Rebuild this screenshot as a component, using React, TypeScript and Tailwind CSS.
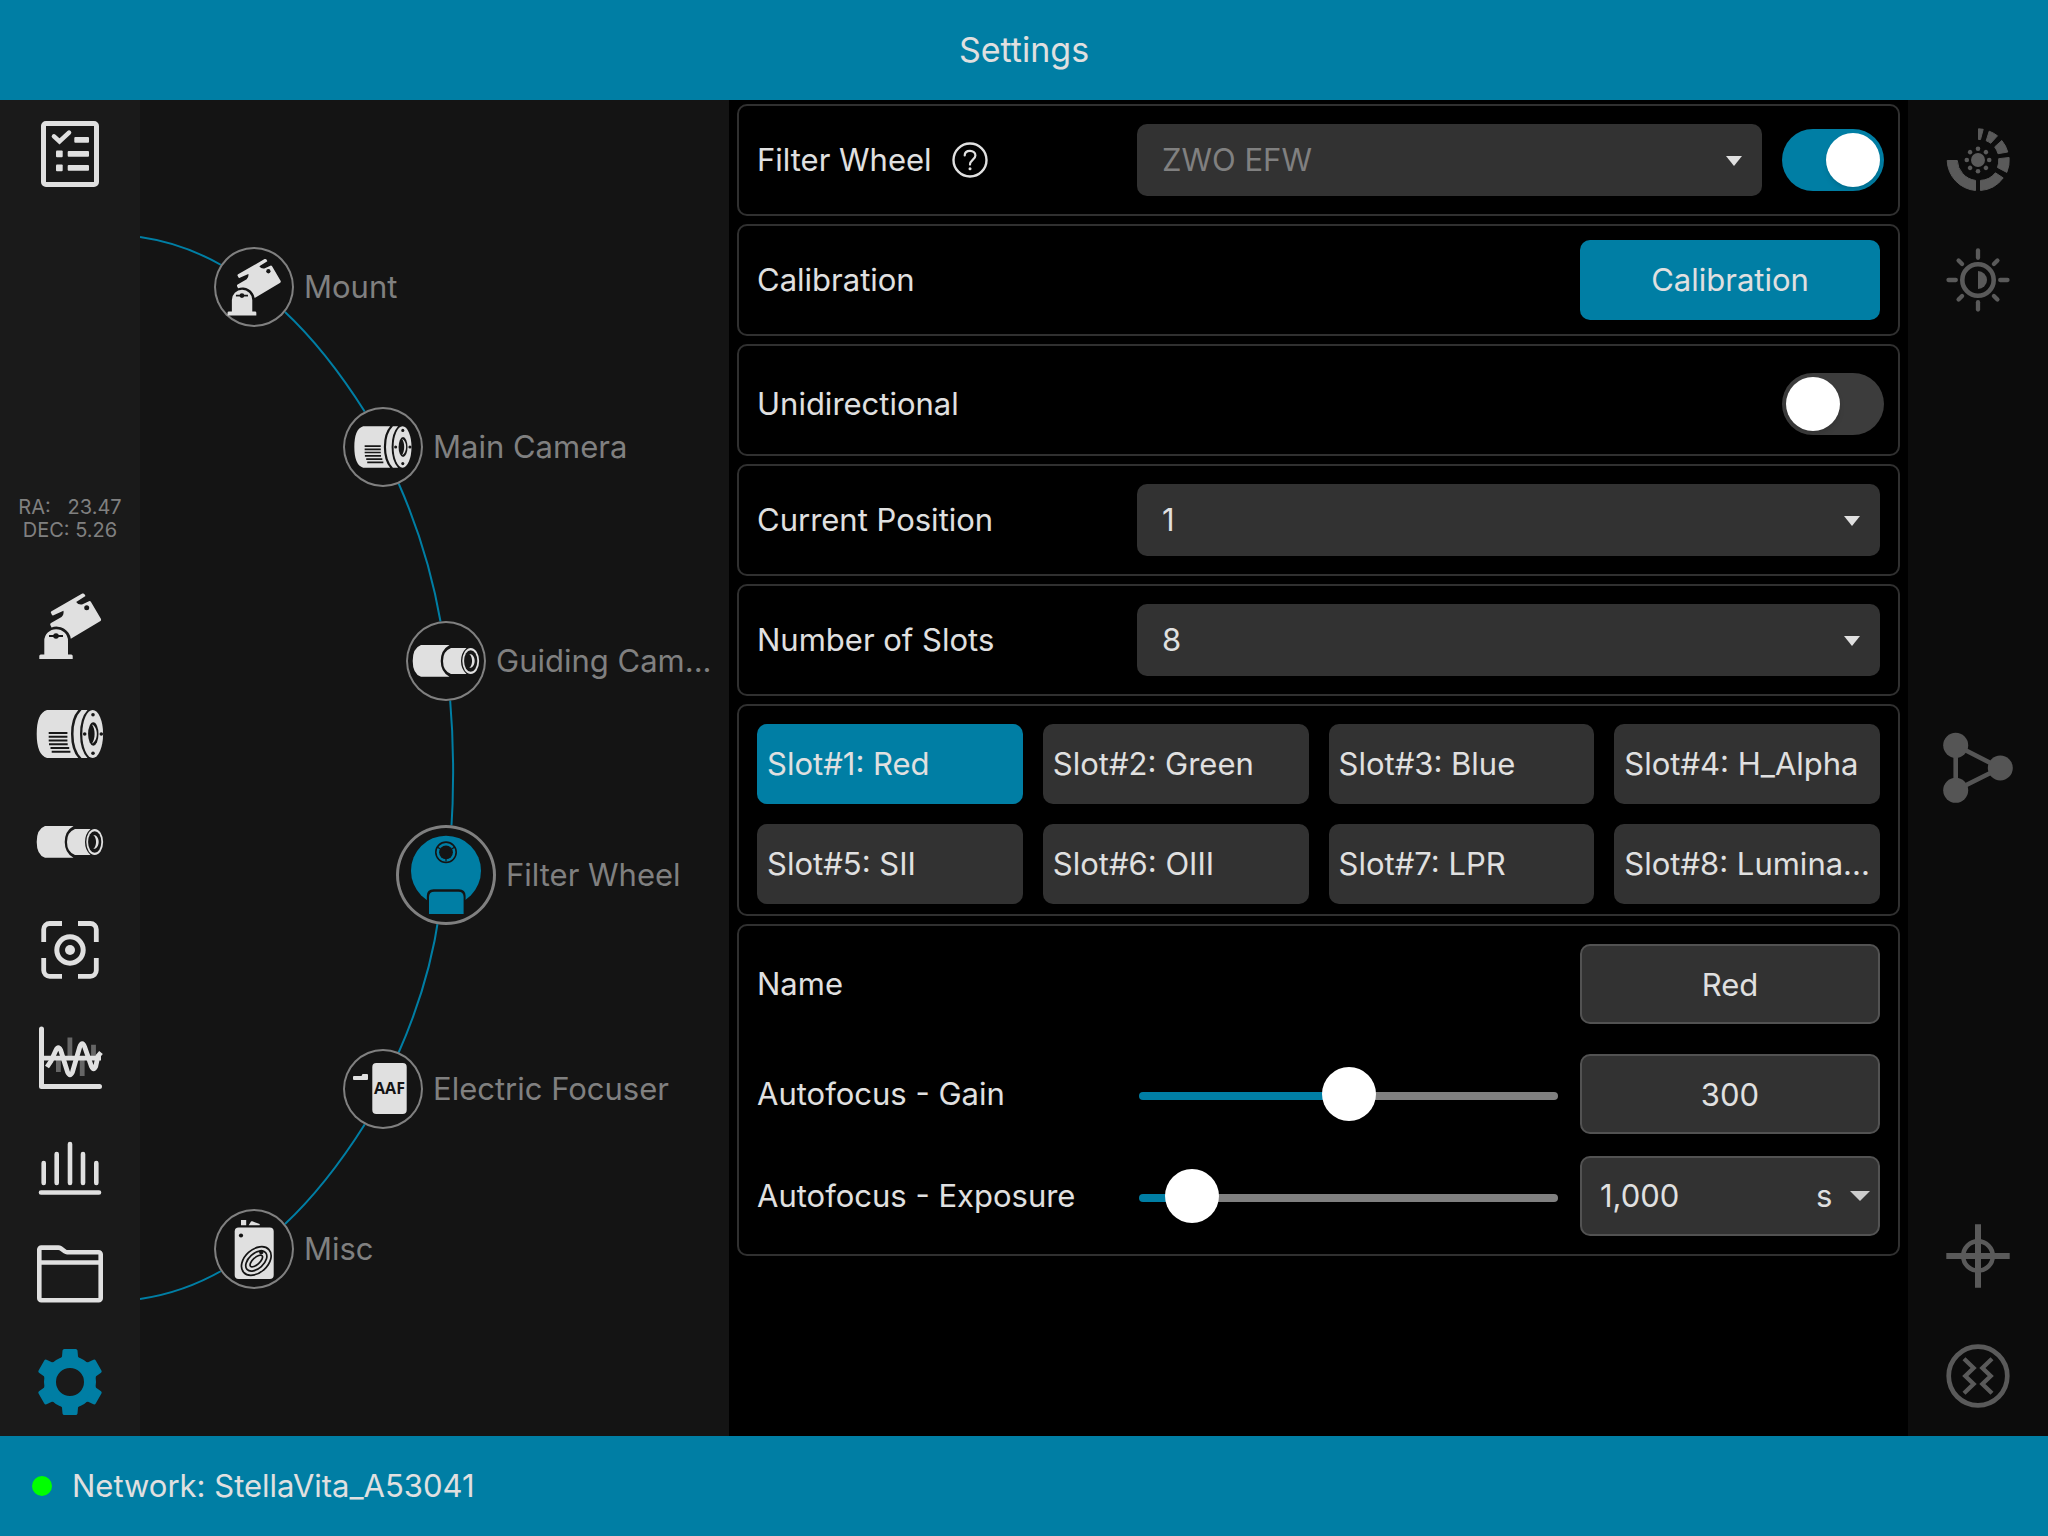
import { useState } from "react";
import type { CSSProperties, ReactNode } from "react";
import clsx from "clsx";

type IconProps = { className?: string };

function Icon({ className = "size-[72px]", box = 72, children }: { className?: string; box?: number; children: ReactNode }) {
  return (
    <svg viewBox={`0 0 ${box} ${box}`} className={clsx("shrink-0", className)} fill="none" aria-hidden="true">
      {children}
    </svg>
  );
}

function TasksIcon() {
  return (
    <Icon>
      <rect x="9.5" y="5.5" width="53" height="61" rx="2.5" stroke="currentColor" strokeWidth="5" />
      <path d="M20 18.4l5.5 5L35 14.6" stroke="currentColor" strokeWidth="4.6" strokeLinecap="round" />
      <g fill="currentColor">
        <rect x="40.3" y="19" width="14.7" height="5.8" rx="1" />
        <rect x="22" y="32.4" width="6.7" height="6.9" rx="1" />
        <rect x="33.7" y="33" width="21.3" height="5.8" rx="1" />
        <rect x="22" y="46.4" width="6.7" height="6.9" rx="1" />
        <rect x="33.7" y="47" width="21.3" height="5.8" rx="1" />
      </g>
    </Icon>
  );
}

function MountIcon({ className }: IconProps) {
  return (
    <Icon className={className}>
      <path
        fill="currentColor"
        d="M17.5 21.2L48.3 3.6Q49.8 3 50.5 4.2L51.5 6 42.2 12Q44 15 48 14.5L55 11.2Q56.3 10.7 57 12L67 29Q67.4 30.3 66.5 31L36.8 48.7A14.5 14.5 0 0 0 17.5 37.5L16.2 34.8Q16 33.8 17 33L27.5 27Q30 25 29.5 20.8L19.5 25.2Q18.6 25.7 18 25L16.8 22.5Q16.7 21.6 17.5 21.2z"
      />
      <path fill="currentColor" d="M5.3 69V66Q5.3 64.5 6.8 64.5H10.3V51a11.85 11.85 0 0 1 23.7 0V64.5H37.2Q38.7 64.5 38.7 66V69z" />
      <circle cx="52.7" cy="17.7" r="2.5" fill="#171717" />
      <path d="M15 46h14" stroke="#171717" strokeWidth="2" />
      <circle cx="22" cy="46" r="2.8" fill="#171717" />
    </Icon>
  );
}

function CameraIcon({ className }: IconProps) {
  return (
    <Icon className={className}>
      <g fill="currentColor">
        <path d="M13 12H44.3Q37 20 37 36T44.3 60H13Q2.7 57 2.7 36 2.7 15 13 12z" />
        <path d="M47.5 12H53.5Q46 20 46 36T53.5 60H47.5Q39.5 52 39.5 36T47.5 12z" />
        <ellipse cx="58.7" cy="36" rx="10.4" ry="24" />
      </g>
      <ellipse cx="59.3" cy="36" rx="5.2" ry="11.7" fill="#171717" />
      <path fill="currentColor" d="M58 26.5C64.5 29 64.5 43 58 45.5 61.5 41 61.5 31 58 26.5z" />
      <g fill="#171717">
        <circle cx="59" cy="16.7" r="1.8" />
        <circle cx="59" cy="55.3" r="1.8" />
        <circle cx="50.7" cy="36" r="1.8" />
        <circle cx="67.3" cy="36" r="1.8" />
      </g>
      <path
        d="M14.7 35h18.7M14.7 38.7h18.7M14.7 42.4h18.7M15 46.2h18.7M16.5 50h18.7M17.7 53.8h18.7"
        stroke="#171717"
        strokeWidth="2"
      />
    </Icon>
  );
}

function GuideIcon({ className }: IconProps) {
  return (
    <Icon className={className}>
      <g fill="currentColor">
        <path d="M11 20H39.5Q30.7 25 30.7 36T39.5 51.8H11Q2.7 49 2.7 36 2.7 23 11 20z" />
        <path d="M41 23H56.5Q51 28 51 36T56.5 49H41Q33 46 33 36T41 23z" />
        <ellipse cx="60.7" cy="36" rx="8.4" ry="13" />
      </g>
      <ellipse cx="60.7" cy="36" rx="6.6" ry="10.8" fill="#171717" />
      <path fill="currentColor" d="M59.3 29C66.5 29 66.5 43 59.3 43 63 40 63 32 59.3 29z" />
    </Icon>
  );
}

function FocusIcon() {
  return (
    <Icon>
      <path
        d="M9.7 28V15.5a6 6 0 0 1 6-6H28M44 9.5H56.3a6 6 0 0 1 6 6V28M62.3 44V56.3a6 6 0 0 1-6 6H44M28 62.3H15.7a6 6 0 0 1-6-6V44"
        stroke="currentColor"
        strokeWidth="4.8"
      />
      <circle cx="36" cy="36" r="13.2" stroke="currentColor" strokeWidth="5" />
      <circle cx="36" cy="36" r="5" fill="currentColor" />
    </Icon>
  );
}

function GraphIcon() {
  return (
    <Icon>
      <path d="M35.9 15.6V35M59.5 22.8V35M24.4 37V50M48.2 37V54" stroke="#666" strokeWidth="4.8" />
      <path d="M7.5 7V64.6H65.5" stroke="currentColor" strokeWidth="5" strokeLinecap="round" strokeLinejoin="round" />
      <path d="M8 36.2H67" stroke="currentColor" strokeWidth="4.8" />
      <path
        d="M13 45L17 39 22 28Q24.3 23.500 26.600 28L33.500 50Q36 55.500 38.500 50L45.700 25Q48.200 18.500 50.700 25L57.500 44.500Q59.600 49 61.700 44.500L64 34 67 30.500"
        stroke="currentColor"
        strokeWidth="4.800"
      />
    </Icon>
  );
}

function HistogramIcon() {
  return (
    <Icon>
      <path
        d="M9.7 33V53M22.7 24V53M36 14V53M49 24V53M62.3 33V53M7 62.5H65"
        stroke="currentColor"
        strokeWidth="4.6"
        strokeLinecap="round"
      />
    </Icon>
  );
}

function FolderIcon() {
  return (
    <Icon>
      <path
        d="M5.3 11.6a2 2 0 0 1 2-2H24.3Q25.5 9.6 26.5 10.2L31 13.5Q32 14.2 33 14.2H64.7a2 2 0 0 1 2 2V60.3a2 2 0 0 1-2 2H7.3a2 2 0 0 1-2-2zM5.3 24.5H66.7"
        stroke="currentColor"
        strokeWidth="4.6"
      />
    </Icon>
  );
}

function GearIcon() {
  return (
    <Icon>
      <circle cx="36" cy="36" r="20" stroke="currentColor" strokeWidth="12" />
      {[0, 60, 120, 180, 240, 300].map((angle) => (
        <path
          key={angle}
          fill="currentColor"
          transform={`rotate(${angle} 36 36)`}
          d="M26.5 13L28 10.5 28.5 4.5Q28.8 3 30.3 3H41.7Q43.2 3 43.5 4.5L44 10.5 45.5 13z"
        />
      ))}
    </Icon>
  );
}

function FilterWheelIcon() {
  return (
    <Icon className="size-[100px]" box={100}>
      <circle cx="50" cy="45.7" r="35" fill="#007ea4" />
      <circle cx="50" cy="27.3" r="10.2" stroke="#141414" strokeWidth="1.6" />
      <circle cx="50" cy="27.3" r="6.9" fill="#141414" />
      <path d="M50 33v3.500M44.500 24l-3-1.700M55.500 24l3-1.700" stroke="#141414" strokeWidth="1.200" />
      <path d="M30.8 92V71Q30.8 64.2 37.6 64.2H62.8Q69.6 64.2 69.6 71V92z" fill="#141414" />
      <path d="M33 89V72Q33 66.7 38.3 66.7H62.3Q67.6 66.7 67.6 72V89z" fill="#007ea4" />
    </Icon>
  );
}

function FocuserIcon() {
  return (
    <Icon className="size-20" box={80}>
      <path fill="currentColor" d="M11 27h7.5l1-2H24q1 0 1 1v4q0 1-1 1H11q-1 0-1-1v-2q0-1 1-1z" />
      <rect x="29.3" y="14" width="34.4" height="51" rx="4" fill="currentColor" />
      <text x="46.5" y="45" textAnchor="middle" className="fill-[#141414] font-['Open_Sans',sans-serif] text-[16px] font-bold">
        AAF
      </text>
    </Icon>
  );
}

function MiscIcon() {
  return (
    <Icon className="size-20" box={80}>
      <path fill="currentColor" d="M27 11h5.2v5.2H27zM34.7 16.2L37 12.5Q37.5 12 38.3 12.3L45.7 15v1.2z" />
      <rect x="20.7" y="18.4" width="39" height="51.6" rx="4" fill="currentColor" />
      <circle cx="27" cy="26.5" r="2.1" fill="#141414" />
      <g transform="rotate(-42 42.3 52)" stroke="#141414" strokeWidth="1.7">
        <ellipse cx="42.3" cy="52" rx="17" ry="11.6" />
        <ellipse cx="42.3" cy="52" rx="12.5" ry="7.5" />
        <ellipse cx="42.3" cy="52" rx="7.8" ry="3.4" />
      </g>
      <circle cx="47.3" cy="43" r="2.3" fill="#141414" />
    </Icon>
  );
}

function ExposureIcon() {
  return (
    <Icon>
      <g fill="currentColor" stroke="currentColor" strokeWidth="1" strokeLinejoin="round">
        <path d="M36.5 4.8L41.2 5.3 38.5 15.5H36.5z" />
        <path d="M47.2 7.2A31 31 0 0 1 55.5 11.8L48.7 19.3A20 20 0 0 0 44.2 16.8z" />
        <path d="M59.8 16.5A31 31 0 0 1 65.8 28L56 29.7A20 20 0 0 0 52.7 22.9z" />
        <path d="M67.1 33.5A31 31 0 0 1 64.8 48.4L55.5 43.5A20 20 0 0 0 56.7 34.7z" />
        <path d="M61.2 53.9A31 31 0 0 1 38.5 66.5V56.4A20 20 0 0 0 53.4 48.8z" />
        <path d="M33.5 66.5A31 31 0 0 1 5.2 36.5H15.3A21 21 0 0 0 33.5 56.4z" />
      </g>
      <circle cx="36" cy="36" r="7" fill="currentColor" />
      {[0, 45, 90, 135, 180, 225, 270, 315].map((angle) => (
        <circle key={angle} cx="36" cy="24.8" r="2.3" fill="currentColor" transform={`rotate(${angle} 36 36)`} />
      ))}
    </Icon>
  );
}

function BrightnessIcon() {
  return (
    <Icon>
      <circle cx="36" cy="36" r="15.7" stroke="currentColor" strokeWidth="4.6" />
      <path d="M36 27a9 9 0 0 1 0 18z" fill="currentColor" />
      {[0, 45, 90, 135, 180, 225, 270, 315].map((angle) => (
        <path
          key={angle}
          d={angle % 90 ? "M36 13.5V8.5" : "M36 13.8V6.5"}
          stroke="currentColor"
          strokeWidth="4.3"
          strokeLinecap="round"
          transform={`rotate(${angle} 36 36)`}
        />
      ))}
    </Icon>
  );
}

function NodesIcon() {
  return (
    <Icon>
      <path d="M13.7 13.3V58.3L58.3 36z" stroke="currentColor" strokeWidth="4.6" />
      <g fill="currentColor">
        <circle cx="13.7" cy="13.3" r="12.5" />
        <circle cx="13.7" cy="58.3" r="12.5" />
        <circle cx="58.3" cy="36" r="12.5" />
      </g>
    </Icon>
  );
}

function CrosshairIcon() {
  return (
    <Icon>
      <path d="M36 4.3V67.7M4.3 36H67.7" stroke="currentColor" strokeWidth="6" />
      <circle cx="36" cy="36" r="14.8" stroke="currentColor" strokeWidth="4.5" />
    </Icon>
  );
}

function AnnotateIcon() {
  return (
    <Icon>
      <circle cx="36" cy="36" r="29.3" stroke="currentColor" strokeWidth="4.7" />
      <path
        d="M22 18.8L31.6 28 23.3 36 31.6 44 22 53.2M50 18.8L40.4 28 48.7 36 40.4 44 50 53.2"
        stroke="currentColor"
        strokeWidth="4.3"
      />
    </Icon>
  );
}

const sideTools = [
  { label: "Mount", icon: <MountIcon /> },
  { label: "Main camera", icon: <CameraIcon /> },
  { label: "Guiding camera", icon: <GuideIcon /> },
  { label: "Focus", icon: <FocusIcon /> },
  { label: "Guiding graph", icon: <GraphIcon /> },
  { label: "Histogram", icon: <HistogramIcon /> },
  { label: "Files", icon: <FolderIcon /> },
  { label: "Settings", icon: <GearIcon />, active: true },
];

const devices = [
  { label: "Mount", place: "left-[74px] top-[147px]", icon: <MountIcon className="size-[62px]" /> },
  { label: "Main Camera", place: "left-[203px] top-[307px]", icon: <CameraIcon className="size-[62px]" /> },
  { label: "Guiding Cam...", place: "left-[266px] top-[521px]", icon: <GuideIcon className="size-[72px]" /> },
  { label: "Filter Wheel", place: "left-[256px] top-[725px]", icon: <FilterWheelIcon />, active: true },
  { label: "Electric Focuser", place: "left-[203px] top-[949px]", icon: <FocuserIcon /> },
  { label: "Misc", place: "left-[74px] top-[1109px]", icon: <MiscIcon /> },
];

const slots = ["Red", "Green", "Blue", "H_Alpha", "SII", "OIII", "LPR", "Lumina..."];

function RailButton({ label, className, children }: { label: string; className?: string; children: ReactNode }) {
  return (
    <button type="button" aria-label={label} className={clsx("flex w-full items-center justify-center", className)}>
      {children}
    </button>
  );
}

function Card({ className, children }: { className?: string; children: ReactNode }) {
  return <section className={clsx("rounded-[10px] border-2 border-[#303030] px-[18px]", className)}>{children}</section>;
}

function Select({ id, options, disabled }: { id: string; options: string[]; disabled?: boolean }) {
  return (
    <div className="relative flex-1">
      <select
        id={id}
        disabled={disabled}
        className={clsx(
          "h-[72px] w-full appearance-none rounded-[10px] bg-[#323232] pr-16 pl-[25px] opacity-100",
          disabled ? "text-[#808080]" : "text-[#e0e0e0]"
        )}
      >
        {options.map((option) => (
          <option key={option}>{option}</option>
        ))}
      </select>
      <svg viewBox="0 0 16 10" className="pointer-events-none absolute top-8 right-5 h-2.5 w-4" aria-hidden="true">
        <path d="M0 0H16L8 10z" fill="#e0e0e0" />
      </svg>
    </div>
  );
}

type ToggleProps = { id: string; label?: string; checked: boolean; onChange: (next: boolean) => void };

function Toggle({ id, label, checked, onChange }: ToggleProps) {
  return (
    <input
      id={id}
      type="checkbox"
      role="switch"
      aria-label={label}
      checked={checked}
      onChange={(event) => onChange(event.target.checked)}
      className="-mr-1 flex h-[62px] w-[102px] shrink-0 appearance-none items-center rounded-full bg-[#3c3c3c] px-1 before:size-[54px] before:rounded-full before:bg-white before:shadow-md checked:justify-end checked:bg-[#007ea4]"
    />
  );
}

function Slider({ label, value, max, onChange }: { label: string; value: number; max: number; onChange: (next: number) => void }) {
  return (
    <input
      type="range"
      aria-label={label}
      min={0}
      max={max}
      value={value}
      onChange={(event) => onChange(Number(event.target.value))}
      style={{ "--fill": `${(value / max) * 100}%` } as CSSProperties}
      className="mx-0.5 mt-1 h-[54px] min-w-0 flex-1 appearance-none bg-transparent [&::-webkit-slider-runnable-track]:h-2 [&::-webkit-slider-runnable-track]:rounded-full [&::-webkit-slider-runnable-track]:bg-[linear-gradient(to_right,#007ea4_var(--fill),#808080_var(--fill))] [&::-webkit-slider-thumb]:-mt-[25px] [&::-webkit-slider-thumb]:size-[54px] [&::-webkit-slider-thumb]:appearance-none [&::-webkit-slider-thumb]:rounded-full [&::-webkit-slider-thumb]:bg-white"
    />
  );
}

export default function App() {
  const [connected, setConnected] = useState(true);
  const [unidirectional, setUnidirectional] = useState(false);
  const [activeSlot, setActiveSlot] = useState(0);
  const [gain, setGain] = useState(300);
  const [exposure, setExposure] = useState(1);

  const labelClass = "w-[380px] shrink-0";
  const fieldClass = "h-20 w-[300px] shrink-0 rounded-[10px] border-2 border-[#525252] bg-[#323232]";

  return (
    <div className="flex min-h-screen flex-col bg-black font-[Inter,sans-serif] text-[31px] leading-10 text-[#e0e0e0]">
      <header className="flex h-[100px] items-center justify-center bg-[#007ea4]">
        <h1 className="text-[34px]">Settings</h1>
      </header>

      <div className="flex flex-1">
        <nav className="flex w-[140px] shrink-0 flex-col bg-[#1a1a1a]">
          <RailButton label="Plan" className="h-[108px]">
            <TasksIcon />
          </RailButton>
          <p className="mt-auto pb-[30px] text-center text-[20px] leading-[23px] whitespace-pre text-[#808080]">
            {"RA:   23.47\nDEC: 5.26"}
          </p>
          {sideTools.map((tool) => (
            <RailButton key={tool.label} label={tool.label} className={clsx("h-[108px]", tool.active && "text-[#007ea4]")}>
              {tool.icon}
            </RailButton>
          ))}
        </nav>

        <aside className="relative w-[589px] shrink-0 bg-[#141414]">
          <svg viewBox="140 100 589 1336" className="absolute top-0 left-0 h-[1336px] w-[589px]" fill="none" stroke="#007ea4" strokeWidth="2">
            <path d="M140 237C168 241 197 251 223 266M284 311C315 340 341 374 365 412M398 482C418 527 432 572 441 624M450 698C454 745 454 791 451 835" />
            <path d="M140 1299C168 1295 197 1285 223 1270M284 1225C315 1196 341 1162 365 1124M398 1054C418 1009 432 964 439 915" />
          </svg>
          {devices.map((device) => (
            <button key={device.label} type="button" className={clsx("absolute flex items-center gap-2.5 text-[#808080]", device.place)}>
              <span
                className={clsx(
                  "flex items-center justify-center rounded-full bg-[#141414] text-[#e0e0e0] ring-inset",
                  device.active ? "size-[100px] ring-3 ring-[#808080]" : "size-20 ring-2 ring-[#808080]"
                )}
              >
                {device.icon}
              </span>
              {device.label}
            </button>
          ))}
        </aside>

        <main className="flex min-w-0 flex-1 flex-col gap-2 px-2 pt-1">
          <Card className="flex h-28 items-center">
            <div className="flex w-[380px] shrink-0 items-center gap-5">
              <label htmlFor="wheel">Filter Wheel</label>
              <button type="button" aria-label="Help">
                <Icon className="size-9" box={36}>
                  <circle cx="18" cy="18" r="16.5" stroke="currentColor" strokeWidth="2.4" />
                  <path
                    d="M12.7 13.5C12.7 10.5 15 8.8 18 8.8S23.4 10.6 23.4 13.4C23.4 17.5 18 17.8 18 22.6"
                    stroke="currentColor"
                    strokeWidth="2.2"
                    strokeLinecap="round"
                  />
                  <circle cx="18" cy="26.7" r="1.5" fill="currentColor" />
                </Icon>
              </button>
            </div>
            <div className="flex flex-1 items-center gap-5">
              <Select id="wheel" options={["ZWO EFW"]} disabled={connected} />
              <Toggle id="connected" label="Connected" checked={connected} onChange={setConnected} />
            </div>
          </Card>

          <Card className="flex h-28 items-center justify-between">
            <span>Calibration</span>
            <button type="button" className="h-20 w-[300px] rounded-[10px] bg-[#007ea4]">
              Calibration
            </button>
          </Card>

          <Card className="flex h-28 items-center justify-between pt-2">
            <label htmlFor="unidirectional">Unidirectional</label>
            <Toggle id="unidirectional" checked={unidirectional} onChange={setUnidirectional} />
          </Card>

          <Card className="flex h-28 items-center">
            <label htmlFor="position" className={labelClass}>
              Current Position
            </label>
            <Select id="position" options={["1", "2", "3", "4", "5", "6", "7", "8"]} />
          </Card>

          <Card className="flex h-28 items-center">
            <label htmlFor="slots" className={labelClass}>
              Number of Slots
            </label>
            <Select id="slots" options={["8", "7", "5"]} />
          </Card>

          <Card className="grid grid-cols-4 gap-5 pt-[18px] pb-2.5">
            {slots.map((name, index) => (
              <button
                key={name}
                type="button"
                onClick={() => setActiveSlot(index)}
                className={clsx(
                  "h-20 rounded-[10px] px-2.5 text-left whitespace-nowrap",
                  index === activeSlot ? "bg-[#007ea4]" : "bg-[#323232]"
                )}
              >
                Slot#{index + 1}: {name}
              </button>
            ))}
          </Card>

          <Card className="flex flex-col py-[18px]">
            <div className="mb-[30px] flex items-center justify-between">
              <label htmlFor="name">Name</label>
              <input id="name" defaultValue="Red" className={clsx(fieldClass, "text-center")} />
            </div>
            <div className="mb-[22px] flex items-center">
              <label htmlFor="gain" className={labelClass}>
                Autofocus - Gain
              </label>
              <Slider label="Gain" value={gain} max={600} onChange={setGain} />
              <input
                id="gain"
                value={gain}
                onChange={(event) => setGain(Number(event.target.value) || 0)}
                className={clsx(fieldClass, "ml-5 text-center")}
              />
            </div>
            <div className="flex items-center">
              <label htmlFor="exposure" className={labelClass}>
                Autofocus - Exposure
              </label>
              <Slider label="Exposure" value={exposure} max={14} onChange={setExposure} />
              <div className={clsx(fieldClass, "relative ml-5 flex items-center pl-[18px]")}>
                <input id="exposure" defaultValue="1,000" className="min-w-0 flex-1 bg-transparent" />
                <select aria-label="Exposure unit" className="h-full w-[62px] shrink-0 appearance-none bg-transparent">
                  <option>s</option>
                  <option>ms</option>
                </select>
                <svg viewBox="0 0 20 10" className="pointer-events-none absolute right-2 h-2.5 w-5" aria-hidden="true">
                  <path d="M0 0H20L10 10z" fill="#ccc" />
                </svg>
              </div>
            </div>
          </Card>
        </main>

        <nav className="flex w-[140px] shrink-0 flex-col justify-between bg-[#0c0c0c] text-[#5a5a5a]">
          <div>
            <RailButton label="Exposure" className="h-[120px]">
              <ExposureIcon />
            </RailButton>
            <RailButton label="Brightness" className="h-[120px]">
              <BrightnessIcon />
            </RailButton>
          </div>
          <RailButton label="Star links" className="h-[120px] text-[#555]">
            <NodesIcon />
          </RailButton>
          <div>
            <RailButton label="Crosshair" className="h-[120px]">
              <CrosshairIcon />
            </RailButton>
            <RailButton label="Annotate" className="h-[120px]">
              <AnnotateIcon />
            </RailButton>
          </div>
        </nav>
      </div>

      <footer className="flex h-[100px] items-center gap-5 bg-[#007ea4] px-8">
        <span className="size-5 rounded-full bg-[#00ff00]" />
        <span>Network: StellaVita_A53041</span>
      </footer>
    </div>
  );
}
